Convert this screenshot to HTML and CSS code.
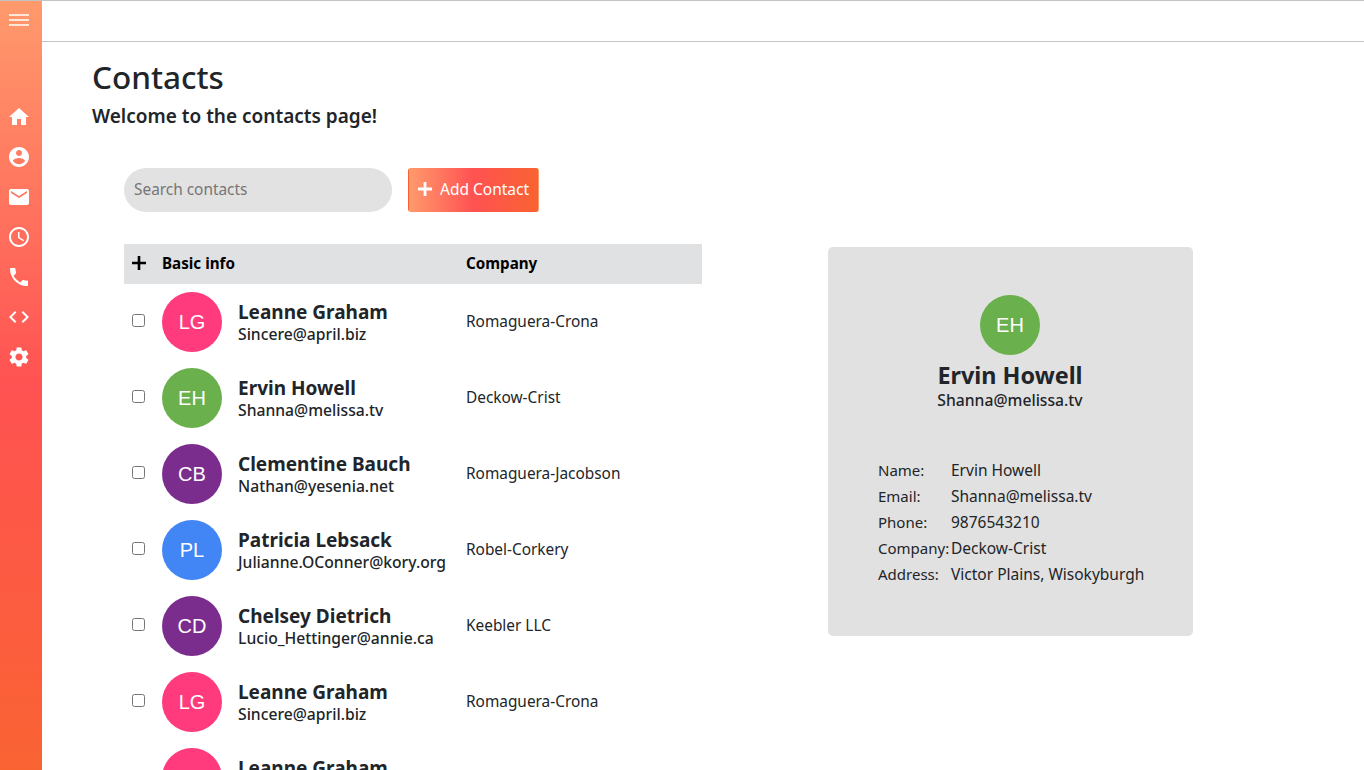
FILE: index.html
```html
<!DOCTYPE html>
<html lang="en">
<head>
    <meta charset="UTF-8">
    <meta name="viewport" content="width=device-width, initial-scale=1.0">
    <title>Contacts</title>
    <link rel="stylesheet" href="styles.css">
</head>
<body>
    <div class="app">
        <nav class="sidebar">
            <svg class="menu-icon" viewBox="0 0 20 12"><path d="M0 1h20M0 6h20M0 11h20"/></svg>
            <div class="nav-icons">
                <svg viewBox="0 0 24 24"><path d="M10 20v-6h4v6h5v-8h3L12 3 2 12h3v8z"/></svg>
                <svg viewBox="0 0 24 24"><path d="M12 2C6.48 2 2 6.48 2 12s4.48 10 10 10 10-4.48 10-10S17.52 2 12 2zm0 3c1.66 0 3 1.34 3 3s-1.34 3-3 3-3-1.34-3-3 1.34-3 3-3zm0 14.2c-2.5 0-4.71-1.28-6-3.22.03-1.99 4-3.08 6-3.08 1.99 0 5.97 1.09 6 3.08-1.29 1.94-3.5 3.22-6 3.22z"/></svg>
                <svg viewBox="0 0 24 24"><path d="M20 4H4c-1.1 0-1.99.9-1.99 2L2 18c0 1.1.9 2 2 2h16c1.1 0 2-.9 2-2V6c0-1.1-.9-2-2-2zm0 4l-8 5-8-5V6l8 5 8-5v2z"/></svg>
                <svg viewBox="0 0 24 24"><path d="M11.99 2C6.47 2 2 6.48 2 12s4.47 10 9.99 10C17.52 22 22 17.52 22 12S17.52 2 11.99 2zM12 20c-4.42 0-8-3.58-8-8s3.58-8 8-8 8 3.58 8 8-3.58 8-8 8zm.5-13H11v6l5.25 3.15.75-1.23-4.5-2.67z"/></svg>
                <svg viewBox="0 0 24 24"><path d="M6.62 10.79c1.44 2.83 3.76 5.14 6.59 6.59l2.2-2.2c.27-.27.67-.36 1.02-.24 1.12.37 2.33.57 3.57.57.55 0 1 .45 1 1V20c0 .55-.45 1-1 1-9.39 0-17-7.61-17-17 0-.55.45-1 1-1h3.5c.55 0 1 .45 1 1 0 1.25.2 2.45.57 3.57.11.35.03.74-.25 1.02l-2.2 2.2z"/></svg>
                <svg viewBox="0 0 24 24"><path d="M9.4 16.6L4.8 12l4.6-4.6L8 6l-6 6 6 6 1.4-1.4zm5.2 0l4.6-4.6-4.6-4.6L16 6l6 6-6 6-1.4-1.4z"/></svg>
                <svg viewBox="0 0 24 24"><path d="M19.14 12.94c.04-.3.06-.61.06-.94 0-.32-.02-.64-.07-.94l2.03-1.58c.18-.14.23-.41.12-.61l-1.92-3.32c-.12-.22-.37-.29-.59-.22l-2.39.96c-.5-.38-1.03-.7-1.62-.94l-.36-2.54c-.04-.24-.24-.41-.48-.41h-3.84c-.24 0-.43.17-.47.41l-.36 2.54c-.59.24-1.13.57-1.62.94l-2.39-.96c-.22-.08-.47 0-.59.22L2.74 8.87c-.12.21-.08.47.12.61l2.03 1.58c-.05.3-.09.63-.09.94s.02.64.07.94l-2.03 1.58c-.18.14-.23.41-.12.61l1.92 3.32c.12.22.37.29.59.22l2.39-.96c.5.38 1.03.7 1.62.94l.36 2.54c.05.24.24.41.48.41h3.84c.24 0 .44-.17.47-.41l.36-2.54c.59-.24 1.13-.56 1.62-.94l2.39.96c.22.08.47 0 .59-.22l1.92-3.32c.12-.22.07-.47-.12-.61l-2.01-1.58zM12 15.6c-1.98 0-3.6-1.62-3.6-3.6s1.62-3.6 3.6-3.6 3.6 1.62 3.6 3.6-1.62 3.6-3.6 3.6z"/></svg>
            </div>
        </nav>

        <div class="content">
            <header class="topbar"></header>
            <main class="main">
                <h1>Contacts</h1>
                <h2>Welcome to the contacts page!</h2>

                <div class="columns">
                    <section class="list">
                        <div class="toolbar">
                            <input class="search" type="text" placeholder="Search contacts">
                            <button class="add-btn" type="button">
                                <svg viewBox="0 0 14 14"><path d="M7 0v14M0 7h14"/></svg>
                                Add Contact
                            </button>
                        </div>

                        <table class="contacts">
                            <thead>
                                <tr>
                                    <th class="col-check"><svg class="plus" viewBox="0 0 14 14"><path d="M7 0v14M0 7h14"/></svg></th>
                                    <th class="col-info">Basic info</th>
                                    <th>Company</th>
                                </tr>
                            </thead>
                            <tbody>
                                <tr>
                                    <td><input type="checkbox"></td>
                                    <td><div class="person"><span class="avatar pink">LG</span><div class="person-text"><div class="name">Leanne Graham</div><div class="email">Sincere@april.biz</div></div></div></td>
                                    <td>Romaguera-Crona</td>
                                </tr>
                                <tr>
                                    <td><input type="checkbox"></td>
                                    <td><div class="person"><span class="avatar green">EH</span><div class="person-text"><div class="name">Ervin Howell</div><div class="email">Shanna@melissa.tv</div></div></div></td>
                                    <td>Deckow-Crist</td>
                                </tr>
                                <tr>
                                    <td><input type="checkbox"></td>
                                    <td><div class="person"><span class="avatar purple">CB</span><div class="person-text"><div class="name">Clementine Bauch</div><div class="email">Nathan@yesenia.net</div></div></div></td>
                                    <td>Romaguera-Jacobson</td>
                                </tr>
                                <tr>
                                    <td><input type="checkbox"></td>
                                    <td><div class="person"><span class="avatar blue">PL</span><div class="person-text"><div class="name">Patricia Lebsack</div><div class="email">Julianne.OConner@kory.org</div></div></div></td>
                                    <td>Robel-Corkery</td>
                                </tr>
                                <tr>
                                    <td><input type="checkbox"></td>
                                    <td><div class="person"><span class="avatar purple">CD</span><div class="person-text"><div class="name">Chelsey Dietrich</div><div class="email">Lucio_Hettinger@annie.ca</div></div></div></td>
                                    <td>Keebler LLC</td>
                                </tr>
                                <tr>
                                    <td><input type="checkbox"></td>
                                    <td><div class="person"><span class="avatar pink">LG</span><div class="person-text"><div class="name">Leanne Graham</div><div class="email">Sincere@april.biz</div></div></div></td>
                                    <td>Romaguera-Crona</td>
                                </tr>
                                <tr>
                                    <td><input type="checkbox"></td>
                                    <td><div class="person"><span class="avatar pink">LG</span><div class="person-text"><div class="name">Leanne Graham</div><div class="email">Sincere@april.biz</div></div></div></td>
                                    <td>Romaguera-Crona</td>
                                </tr>
                            </tbody>
                        </table>
                    </section>

                    <aside class="detail">
                        <span class="avatar green">EH</span>
                        <div class="detail-name">Ervin Howell</div>
                        <div class="email">Shanna@melissa.tv</div>
                        <dl class="fields">
                            <dt>Name:</dt><dd>Ervin Howell</dd>
                            <dt>Email:</dt><dd>Shanna@melissa.tv</dd>
                            <dt>Phone:</dt><dd>9876543210</dd>
                            <dt>Company:</dt><dd>Deckow-Crist</dd>
                            <dt>Address:</dt><dd>Victor Plains, Wisokyburgh</dd>
                        </dl>
                    </aside>
                </div>
            </main>
        </div>
    </div>
</body>
</html>
```

FILE: styles.css
```css
* {
    box-sizing: border-box;
}

body {
    margin: 0;
    font-family: 'Noto Sans', 'Open Sans', sans-serif;
    font-size: 16px;
    color: #212529;
    background-color: #fff;
}

.app {
    display: flex;
    height: 100vh;
    overflow: hidden;
    border-top: 1px solid #c4c4c4;
}

.sidebar {
    flex: 0 0 42px;
    display: flex;
    flex-direction: column;
    align-items: center;
    padding: 13px 4px 0 0;
    background: linear-gradient(180deg, #ff9a6c, #ff5252, #f96332);
}

.sidebar svg {
    fill: #fff;
}

.menu-icon {
    width: 20px;
    height: 12px;
    stroke: #fff;
    stroke-width: 1.6;
}

.nav-icons {
    display: flex;
    flex-direction: column;
    gap: 16px;
    margin-top: 79px;
}

.nav-icons svg {
    display: block;
    width: 24px;
    height: 24px;
}

.content {
    flex: 1;
    min-width: 0;
}

.topbar {
    height: 41px;
    border-bottom: 1px solid #c4c4c4;
}

.main {
    padding: 15px 0 0 50px;
}

h1 {
    margin: 0;
    font-size: 31.5px;
    font-weight: 500;
    line-height: 40px;
}

h2 {
    margin: 6px 0 0;
    font-size: 19px;
    font-weight: 600;
    line-height: 26px;
}

.columns {
    display: flex;
    align-items: flex-start;
    margin-top: 39px;
    padding-left: 32px;
}

.list {
    flex: 0 0 578px;
}

.toolbar {
    display: flex;
    gap: 16px;
    margin-bottom: 32px;
}

.search {
    width: 268px;
    height: 44px;
    padding: 0 10px 2px;
    border: none;
    border-radius: 22px;
    background-color: #e2e2e2;
    font: inherit;
    font-size: 15.4px;
}

.search::placeholder {
    color: #757575;
}

.add-btn {
    display: flex;
    align-items: center;
    gap: 8px;
    height: 44px;
    padding: 0 9px 2px;
    border: 1px solid transparent;
    border-radius: 3px;
    background: linear-gradient(90deg, #ff9a6c, #ff5252, #f96332);
    color: #fff;
    font: inherit;
    font-size: 15.5px;
    cursor: pointer;
}

.add-btn svg {
    width: 14px;
    height: 14px;
    stroke: #fff;
    stroke-width: 2.8;
}

.contacts {
    width: 100%;
    border-collapse: collapse;
    table-layout: fixed;
    font-size: 15.4px;
}

.contacts th {
    height: 40px;
    padding: 0 0 2px;
    background-color: #e0e1e3;
    color: #000;
    font-size: 15.2px;
    font-weight: 700;
    text-align: left;
}

.col-check {
    width: 38px;
    padding-left: 8px !important;
}

.col-info {
    width: 304px;
}

.plus {
    display: block;
    width: 14px;
    height: 14px;
    stroke: #000;
    stroke-width: 2.6;
}

.contacts td {
    height: 76px;
    padding: 0 0 2px;
}

.contacts td:first-child {
    padding: 0 0 4px 8px;
}

.contacts td:nth-child(2) {
    padding: 0;
}

.contacts input[type="checkbox"] {
    display: block;
    margin: 0;
}

.person {
    display: flex;
    align-items: center;
    gap: 16px;
}

.person-text {
    padding-top: 1px;
}

.avatar {
    flex: 0 0 60px;
    display: flex;
    align-items: center;
    justify-content: center;
    width: 60px;
    height: 60px;
    border-radius: 50%;
    color: #fff;
    font-family: 'Liberation Sans', sans-serif;
    font-size: 20px;
}

.pink {
    background-color: #ff3a7d;
}

.green {
    background-color: #6ab04c;
}

.purple {
    background-color: #7b2d8e;
}

.blue {
    background-color: #4285f4;
}

.name {
    font-size: 19px;
    font-weight: 700;
    line-height: 23px;
}

.email {
    font-size: 15.7px;
    font-weight: 500;
    line-height: 20px;
}

.detail {
    display: flex;
    flex-direction: column;
    align-items: center;
    width: 365px;
    height: 389px;
    margin: 79px 0 0 126px;
    padding: 48px 1px 0 0;
    border-radius: 5px;
    background-color: #e1e1e1;
}

.detail-name {
    margin-top: 6px;
    font-size: 23.4px;
    font-weight: 700;
    line-height: 29px;
}

.fields {
    display: grid;
    grid-template-columns: 73px 1fr;
    grid-auto-rows: 26px;
    align-items: center;
    align-self: stretch;
    margin: 47px 0 0;
    padding-left: 50px;
    font-size: 15.5px;
}

.fields dt {
    font-size: 15px;
}

.fields dd {
    margin: 0;
}
```
